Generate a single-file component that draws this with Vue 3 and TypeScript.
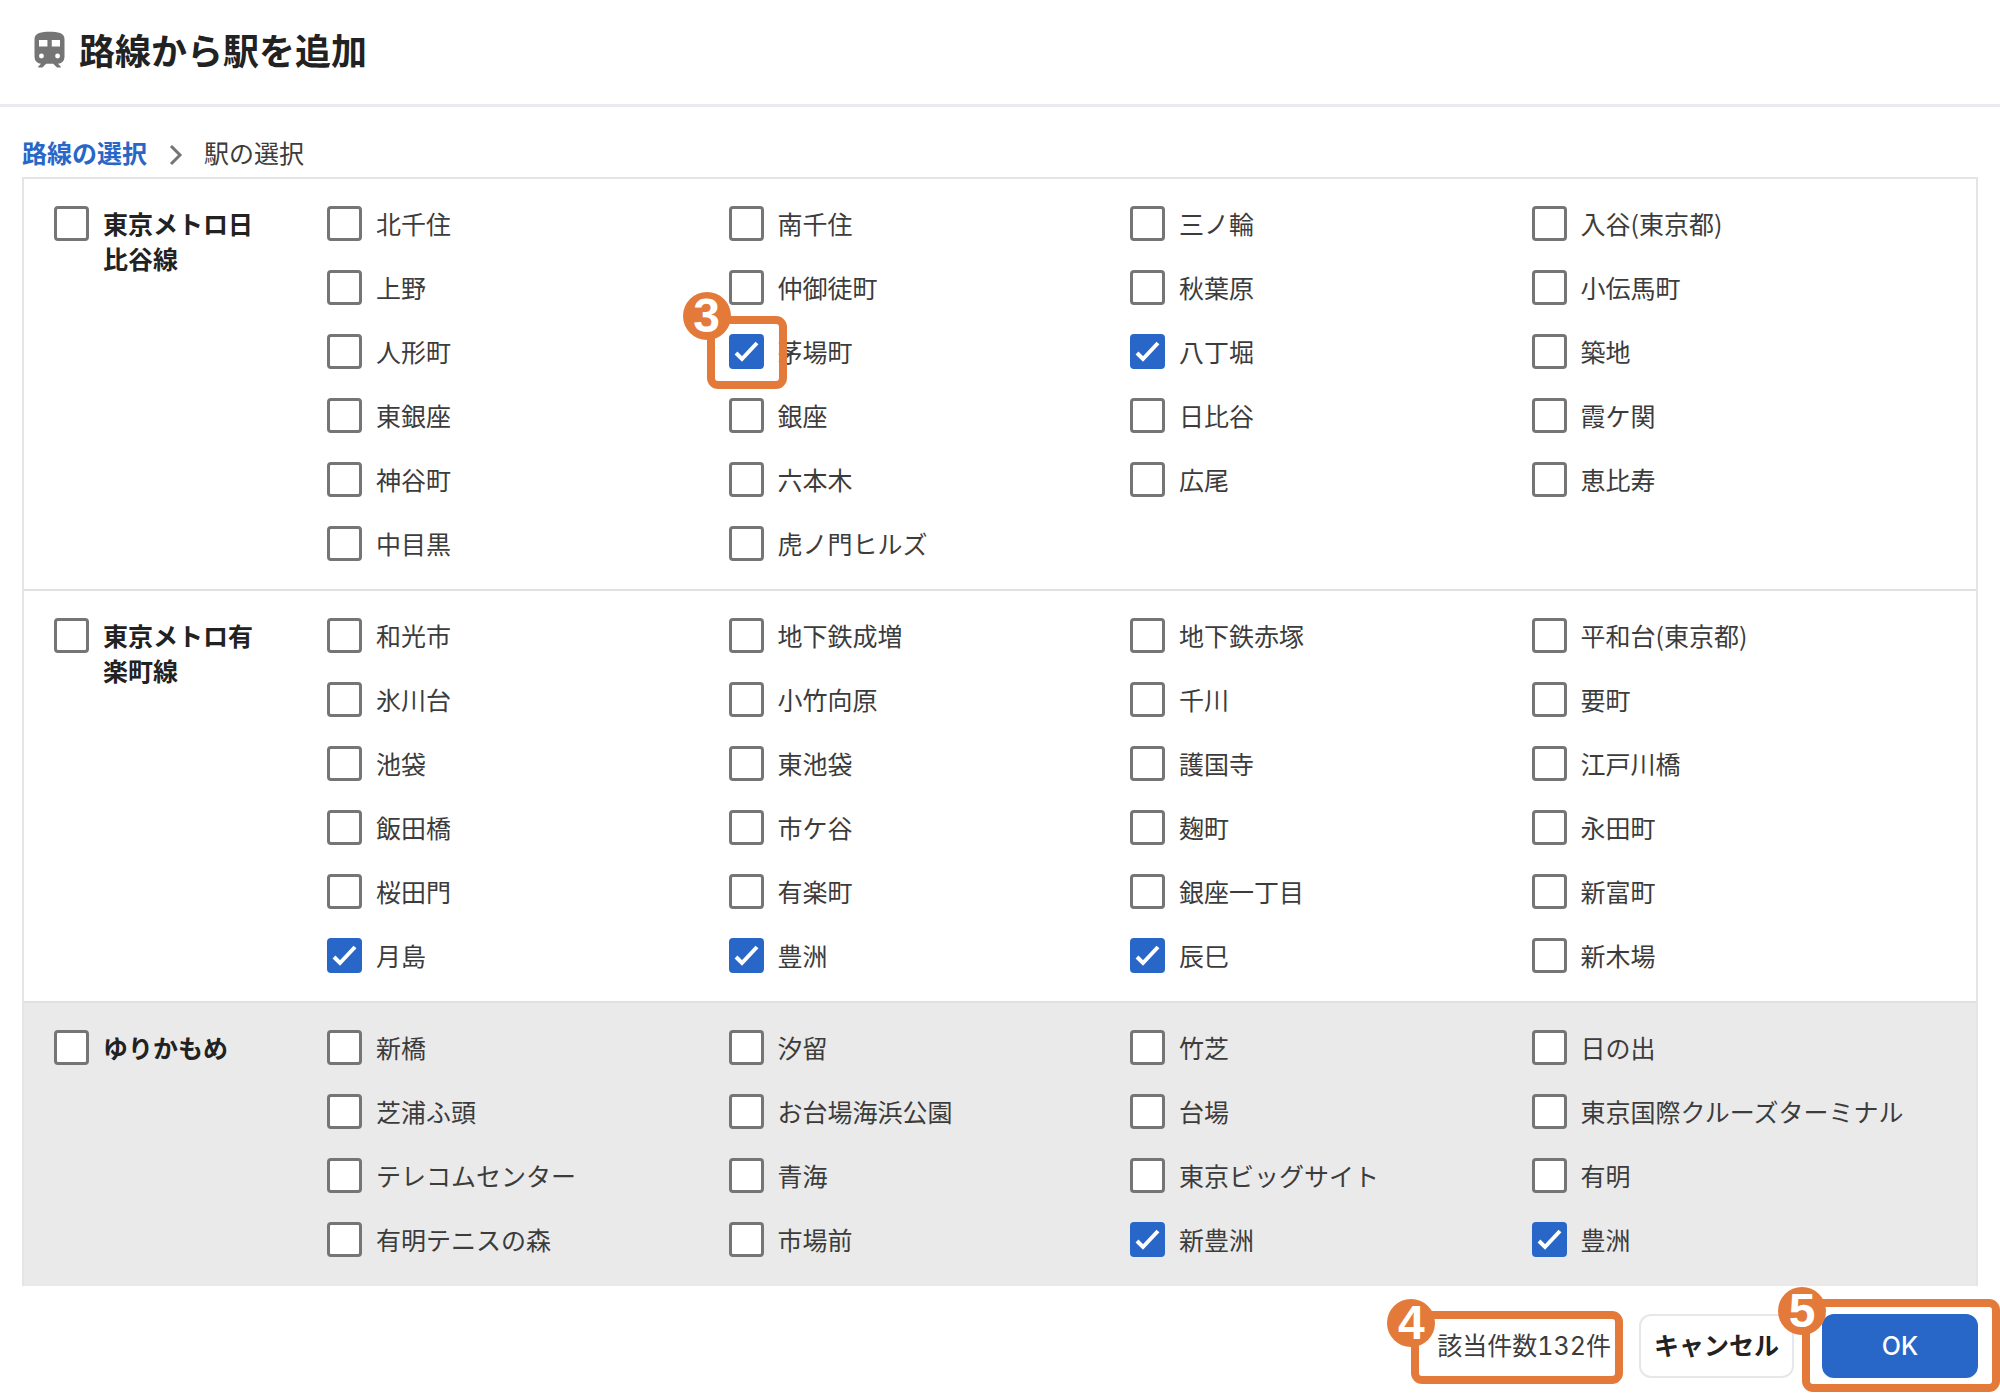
<script setup lang="ts">
import { reactive } from 'vue'

interface Station {
  name: string
  checked: boolean
  step?: number
}

interface Line {
  name: string
  checked: boolean
  shaded: boolean
  stations: Station[]
}

function stations(names: string, checked: string[] = []): Station[] {
  return names.split(' ').map((name) => ({ name, checked: checked.includes(name) }))
}

const lines = reactive<Line[]>([
  {
    name: '東京メトロ日比谷線',
    checked: false,
    shaded: false,
    stations: stations(
      '北千住 南千住 三ノ輪 入谷(東京都) 上野 仲御徒町 秋葉原 小伝馬町 人形町 茅場町 八丁堀 築地 東銀座 銀座 日比谷 霞ケ関 神谷町 六本木 広尾 恵比寿 中目黒 虎ノ門ヒルズ',
      ['茅場町', '八丁堀'],
    ),
  },
  {
    name: '東京メトロ有楽町線',
    checked: false,
    shaded: false,
    stations: stations(
      '和光市 地下鉄成増 地下鉄赤塚 平和台(東京都) 氷川台 小竹向原 千川 要町 池袋 東池袋 護国寺 江戸川橋 飯田橋 市ケ谷 麹町 永田町 桜田門 有楽町 銀座一丁目 新富町 月島 豊洲 辰巳 新木場',
      ['月島', '豊洲', '辰巳'],
    ),
  },
  {
    name: 'ゆりかもめ',
    checked: false,
    shaded: true,
    stations: stations(
      '新橋 汐留 竹芝 日の出 芝浦ふ頭 お台場海浜公園 台場 東京国際クルーズターミナル テレコムセンター 青海 東京ビッグサイト 有明 有明テニスの森 市場前 新豊洲 豊洲',
      ['新豊洲', '豊洲'],
    ),
  },
])

// The guide's third step points at this station
lines[0].stations[9].step = 3
</script>

<template>
  <div class="dialog" lang="ja">
    <header class="header">
      <svg class="train" viewBox="0 0 24 24" aria-hidden="true">
        <path
          fill-rule="evenodd"
          d="M12 2C8 2 4 2.500 4 6v9.500A3.500 3.500 0 0 0 7.500 19L6 20.500v.5h2.230l2-2H14l2 2h2v-.5L16.500 19a3.500 3.500 0 0 0 3.500-3.500V6c0-3.500-3.580-4-8-4ZM7.700 16.200a1.300 1.300 0 1 1 0-2.600 1.300 1.300 0 0 1 0 2.600ZM10.900 9.800H6.400V6.400h4.500Zm2.300 0V6.400h4.400v3.400Zm3.100 6.400a1.300 1.300 0 1 1 0-2.600 1.300 1.300 0 0 1 0 2.600Z"
        />
      </svg>
      <h1>路線から駅を追加</h1>
    </header>

    <nav class="crumbs">
      <a href="#">路線の選択</a>
      <svg class="chevron" viewBox="0 0 14 22" aria-hidden="true"><path d="M2 2l9 9-9 9" /></svg>
      <span>駅の選択</span>
    </nav>

    <main class="panel">
      <section v-for="line in lines" :key="line.name" class="line" :class="{ shaded: line.shaded }">
        <label class="choice group">
          <span class="box">
            <input v-model="line.checked" type="checkbox" />
            <svg viewBox="0 0 35 35" aria-hidden="true"><path d="M7 19l6 6L28 9" /></svg>
          </span>
          <span class="name">{{ line.name }}</span>
        </label>
        <div class="stations">
          <label v-for="s in line.stations" :key="s.name" class="choice">
            <span class="box">
              <input v-model="s.checked" type="checkbox" />
              <svg viewBox="0 0 35 35" aria-hidden="true"><path d="M7 19l6 6L28 9" /></svg>
              <span v-if="s.step" class="mark mark-check"><b class="num">{{ s.step }}</b></span>
            </span>
            <span class="name">{{ s.name }}</span>
          </label>
        </div>
      </section>
    </main>

    <footer class="footer">
      <p class="count">該当件数132件<span class="mark mark-count"><b class="num">4</b></span></p>
      <button type="button" class="btn">キャンセル</button>
      <div class="target">
        <button type="button" class="btn primary">OK</button>
        <span class="mark mark-ok"><b class="num">5</b></span>
      </div>
    </footer>
  </div>
</template>

<style>
body {
  margin: 0;
  background: #fff;
}
</style>

<style scoped>
.dialog {
  font-family: 'Noto Sans CJK JP', sans-serif;
  font-size: 25px;
  line-height: 35px;
  color: #3c3c3c;
  overflow-x: hidden;
  padding-bottom: 20px;
}
.header {
  display: flex;
  align-items: center;
  gap: 7px;
  box-sizing: border-box;
  height: 107px;
  padding: 0 27px 7px;
  border-bottom: 3px solid #e9ebf0;
}
.train {
  width: 45px;
  height: 45px;
  margin-top: 4px;
  fill: #757575;
}
h1 {
  margin: 0;
  font-size: 36px;
  line-height: 48px;
  font-weight: 700;
  color: #222;
}
.crumbs {
  display: flex;
  align-items: center;
  padding: 28px 22px 7px;
}
.crumbs a {
  font-weight: 700;
  color: #2867c8;
  text-decoration: none;
}
.chevron {
  width: 14px;
  height: 22px;
  margin: 4px 21px 0 22px;
  fill: none;
  stroke: #757575;
  stroke-width: 3;
}
.panel {
  margin: 0 22px;
  border: 2px solid #e3e5e8;
  border-bottom: 0;
}
.line {
  display: flex;
  padding: 12px 43px 14px 30px;
  border-bottom: 2px solid #e0e0e0;
}
.line.shaded {
  padding-bottom: 13px;
  background: #eaeaea;
  border-bottom-color: #eaeaea;
}
.stations {
  flex: 1;
  display: grid;
  grid-template-columns: repeat(4, 1fr);
  grid-auto-rows: 64px;
}
.choice {
  display: flex;
  align-items: center;
  gap: 14px;
}
.group {
  width: 215px;
  margin-right: 58px;
  padding-top: 15px;
  align-items: flex-start;
}
.group .name {
  font-weight: 700;
  color: #222;
  max-width: 160px;
}
.box {
  position: relative;
  flex: none;
  display: grid;
  width: 35px;
  height: 35px;
}
.box input,
.box svg {
  grid-area: 1 / 1;
  width: 35px;
  height: 35px;
}
.box input {
  appearance: none;
  box-sizing: border-box;
  margin: 0;
  border: 3px solid #757575;
  border-radius: 4px;
  background: #fff;
}
.box input:checked {
  background: #2867c8;
  border-color: #2867c8;
}
.box svg {
  fill: none;
  stroke: #fff;
  stroke-width: 4;
  visibility: hidden;
  pointer-events: none;
}
.box input:checked + svg {
  visibility: visible;
}
.footer {
  display: flex;
  justify-content: flex-end;
  align-items: center;
  gap: 28px;
  padding: 28px 22px 0;
  font-family: Inter, 'Noto Sans CJK JP', sans-serif;
}
.count {
  position: relative;
  margin: 0;
  font-variant-numeric: tabular-nums;
}
.btn {
  box-sizing: border-box;
  height: 64px;
  min-width: 155px;
  padding: 0 13px;
  border: 2px solid #e5e7eb;
  border-radius: 12px;
  background: #fff;
  color: #222;
  font: inherit;
  font-weight: 700;
}
.btn.primary {
  min-width: 156px;
  border-color: #2867c8;
  background: #2867c8;
  color: #fff;
  font-weight: 500;
}
.target {
  position: relative;
}

/* Guide frames laid over the controls */
.mark {
  position: absolute;
  box-sizing: border-box;
  border: 8px solid #e37a3a;
  border-radius: 11px;
  pointer-events: none;
}
.mark-check {
  inset: -18px -23px -20px -22px;
}
.mark-count {
  inset: -18px -12px -20px -26px;
}
.mark-ok {
  inset: -15px -22px -14px -20px;
}
.num {
  position: absolute;
  left: -32px;
  top: -32px;
  width: 48px;
  height: 48px;
  border-radius: 50%;
  background: #e37a3a;
  color: #fff;
  font: 700 48px/48px 'Liberation Sans', sans-serif;
  text-align: center;
}
.footer .num {
  top: -20px;
}
</style>
